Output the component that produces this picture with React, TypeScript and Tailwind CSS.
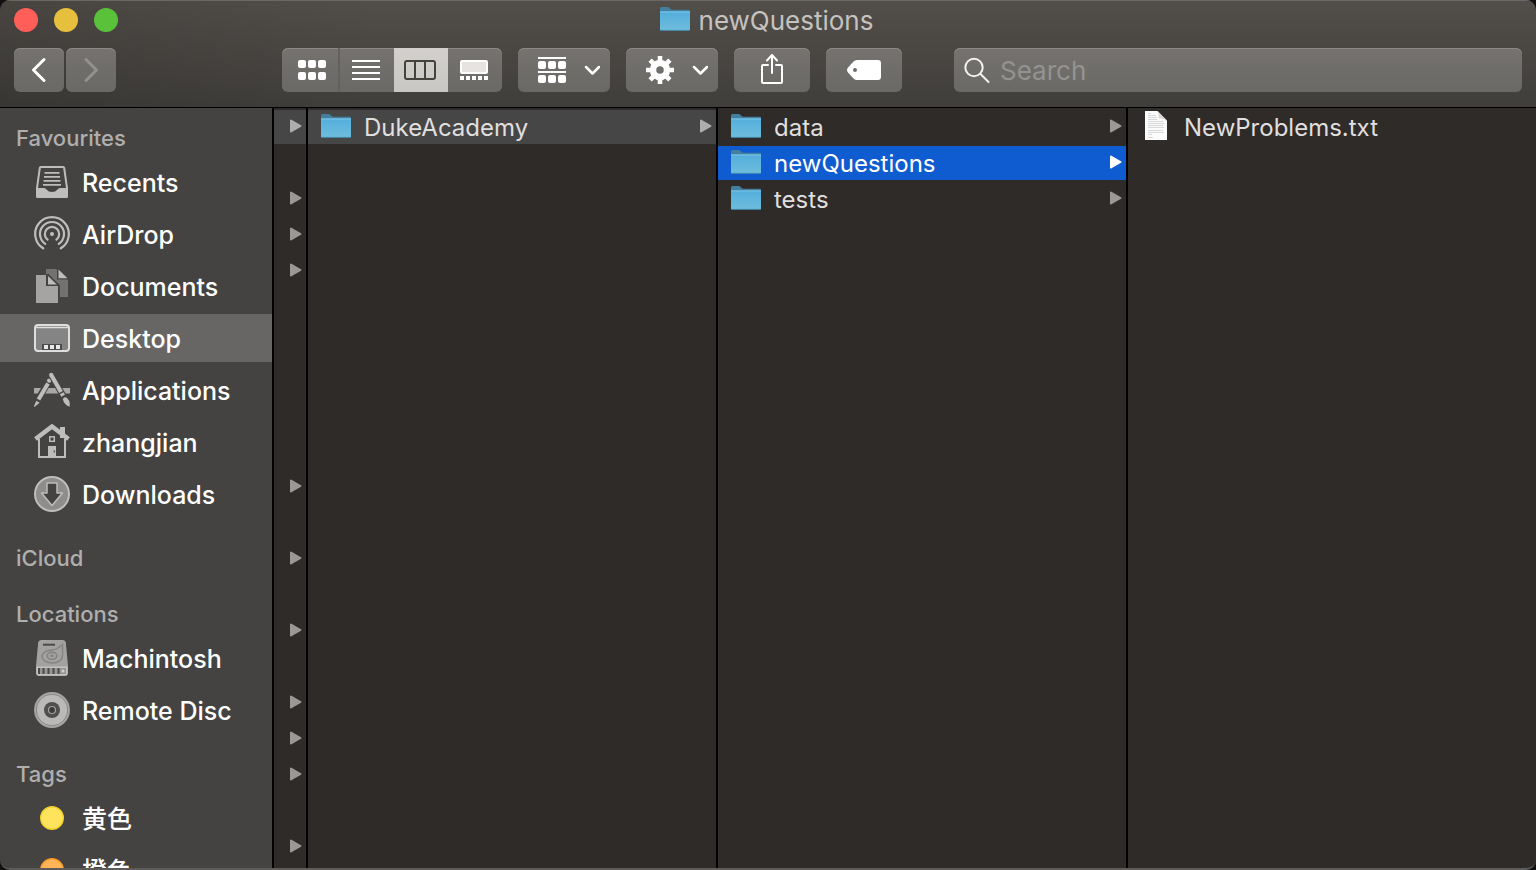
import React from "react";

const svg = "block shrink-0";

function FolderIcon() {
  return (
    <svg className={svg} width="32" height="26" viewBox="0 1 32 26" aria-hidden="true">
      <defs>
        <linearGradient id="folderFace" x1="0" y1="0" x2="0" y2="1">
          <stop offset="0" stopColor="#53aedb" />
          <stop offset="1" stopColor="#6fbddd" />
        </linearGradient>
      </defs>
      <path d="M1 2.500Q1 1 2.500 1H8.500Q9.500 1 10.300 1.800L11.500 3Q12.300 3.800 13.500 3.800H30Q31 3.800 31 5V23H1Z" fill="#447f9f" />
      <path d="M1 5.500H31V23.500Q31 24.600 30 24.600H2Q1 24.600 1 23.500Z" fill="url(#folderFace)" />
      <path d="M1 5.500H31V6.400H1Z" fill="#85cdec" />
      <path d="M1.300 24.400H30.700" stroke="#3e88ab" strokeWidth="0.800" />
    </svg>
  );
}

function FileIcon() {
  return (
    <svg className={svg} width="24" height="34" viewBox="0 0 24 34" aria-hidden="true">
      <path d="M1 1H13.500L23 10.500V30H1Z" fill="#fbfbfb" />
      <path d="M13.500 1Q15.500 5 14.500 8.500Q18.500 7.800 23 11Z" fill="#d6d6d6" />
      <path
        d="M4 3.500H7M4 5.500H12M4 7.500H13M4 9.500H13M4 11.500H19M4 13.500H20M4 15.500H19M4 17.500H20M4 20.500H19M4 22.500H20M4 24.500H8M4 27.500H9"
        stroke="#c9c9c9"
        strokeWidth="0.700"
      />
    </svg>
  );
}

function Arrow() {
  return (
    <svg className={svg} width="12" height="14" viewBox="0 0 12 14" aria-hidden="true">
      <path d="M1 1.500L10.500 7L1 12.500Z" fill="currentColor" stroke="currentColor" strokeWidth="2" strokeLinejoin="round" />
    </svg>
  );
}

function Chevron() {
  return (
    <svg className={svg} width="16" height="10" viewBox="0 0 16 10" fill="none" aria-hidden="true">
      <path d="M2 2L8.500 8.500L15 2" stroke="#fff" strokeWidth="2.500" strokeLinecap="round" strokeLinejoin="round" />
    </svg>
  );
}

function RecentsIcon() {
  return (
    <svg className={svg} width="36" height="36" viewBox="0 0 36 36" fill="none" aria-hidden="true">
      <path d="M7 3H29Q30 3 30.200 4L33 24V32.500Q33 33 32.500 33H3.500Q3 33 3 32.500V24L5.800 4Q6 3 7 3Z" stroke="#bdbdbc" strokeWidth="2" />
      <path d="M3 24H10Q11.500 24 12.500 25.500Q14.500 28 18 28T23.500 25.500Q24.500 24 26 24H33V33H3Z" fill="#bdbdbc" />
      <path d="M10.500 8.800H25.500M10 12.800H26M9.500 16.800H26.500M9 20.800H27" stroke="#bdbdbc" strokeWidth="1.800" />
    </svg>
  );
}

function AirDropIcon() {
  return (
    <svg className={svg} width="36" height="36" viewBox="0 0 36 36" fill="none" stroke="#bdbdbc" strokeWidth="2.200" strokeLinecap="round" aria-hidden="true">
      <circle cx="18" cy="18" r="2.100" fill="#bdbdbc" stroke="none" />
      <path d="M13.600 23.700A7.200 7.200 0 1 1 22.400 23.700" />
      <path d="M11.200 27.900A12 12 0 1 1 24.800 27.900" />
      <path d="M9.200 32.300A16.800 16.800 0 1 1 26.800 32.300" />
    </svg>
  );
}

function DocumentsIcon() {
  return (
    <svg className={svg} width="36" height="36" viewBox="0 0 36 36" aria-hidden="true">
      <path d="M12 1H22L34 12V29H12Z" fill="#737271" />
      <path d="M23 0V11.500H35V9.500L25 0Z" fill="#444342" />
      <path d="M24.500 1.500L33.500 10.300H24.500Z" fill="#bdbdbc" />
      <path d="M1 6H12.500L25.500 17V36H1Z" fill="#444342" />
      <path d="M2 7H12V18H24V35H2Z" fill="#a5a4a3" />
      <path d="M14 8L23 16.500H14Z" fill="#bdbdbc" />
      <path d="M13.500 6L25 17.500V30" fill="none" stroke="#444342" strokeWidth="1.500" />
    </svg>
  );
}

function DesktopIcon() {
  return (
    <svg className={svg} width="36" height="36" viewBox="0 0 36 36" fill="none" aria-hidden="true">
      <rect x="1" y="5" width="34" height="26" rx="3" fill="#858484" stroke="#dedede" strokeWidth="2" />
      <path d="M2 7.500H34" stroke="#dedede" strokeWidth="1.500" />
      <path d="M8 24H28V30H8Z" fill="#4b4b4a" />
      <path d="M10 25h4v4h-4zM16 25h4v4h-4zM22 25h4v4h-4z" fill="#e8e8e8" />
    </svg>
  );
}

function ApplicationsIcon() {
  return (
    <svg className={svg} width="36" height="36" viewBox="0 0 36 36" fill="none" aria-hidden="true">
      <path d="M0 16H36V21.500H0Z" fill="#a9a8a7" />
      <path d="M16 7L2 31" stroke="#444342" strokeWidth="6.500" />
      <path d="M14 11.500L4.500 27.500" stroke="#bdbdbc" strokeWidth="4" />
      <circle cx="15.200" cy="8.600" r="2.200" fill="#bdbdbc" />
      <path d="M2.300 28.800L5.600 30.800L0.500 35L0 34.200Z" fill="#bdbdbc" />
      <path d="M17 2.500L31 27" stroke="#444342" strokeWidth="6.500" />
      <path d="M17.200 3L27 20" stroke="#bdbdbc" strokeWidth="4.200" />
      <circle cx="17.200" cy="2.900" r="2.100" fill="#bdbdbc" />
      <path d="M27.700 21.200L29.200 23.800" stroke="#bdbdbc" strokeWidth="4.200" />
      <path d="M28.800 27Q30.500 24 33.500 26.500Q36.500 29 35.500 34.800Q30 32.500 28.800 27Z" fill="#bdbdbc" />
    </svg>
  );
}

function HomeIcon() {
  return (
    <svg className={svg} width="36" height="36" viewBox="0 0 36 36" fill="none" aria-hidden="true">
      <path d="M26 3H31V14H26Z" fill="#bdbdbc" />
      <path d="M5 15V33H31V15" stroke="#bdbdbc" strokeWidth="2" />
      <path d="M1.500 15L18 2.500L34.500 15" stroke="#bdbdbc" strokeWidth="4.500" />
      <rect x="15.800" y="12.800" width="4.500" height="4.500" stroke="#bdbdbc" strokeWidth="1.500" />
      <path d="M14 22H22V33H14Z" fill="#bdbdbc" />
      <path d="M20.300 26.500V28.500" stroke="#444342" strokeWidth="1.200" />
    </svg>
  );
}

function DownloadsIcon() {
  return (
    <svg className={svg} width="36" height="36" viewBox="0 0 36 36" fill="none" aria-hidden="true">
      <circle cx="18" cy="18" r="17" fill="#8e8d8c" stroke="#bdbdbc" strokeWidth="2" />
      <path d="M13 7H23V17H28.500L18 29.500L7.500 17H13Z" fill="#444342" stroke="#bdbdbc" strokeWidth="1.500" strokeLinejoin="round" />
    </svg>
  );
}

function DriveIcon() {
  return (
    <svg className={svg} width="36" height="36" viewBox="0 0 36 36" fill="none" aria-hidden="true">
      <path d="M7 0H29Q31.500 0 31.800 2.500L34 26V33Q34 36 31 36H5Q2 36 2 33V26L4.200 2.500Q4.500 0 7 0Z" fill="#a3a2a1" />
      <path d="M2.500 26.500H33.500V33Q33.500 35.500 31 35.500H5Q2.500 35.500 2.500 33Z" fill="#c2c2c1" />
      <path d="M4 28H32V34H4Z" fill="#979695" />
      <path d="M9 4.700H21" stroke="#4b4a49" strokeWidth="2" />
      <path d="M28.500 4.500V15.500C28.500 20 24 23 18.500 23S8 20 8 16.500S13 10 17.500 10C22.500 10 25 8 28.500 4.500Z" stroke="#858483" strokeWidth="1.400" />
      <ellipse cx="18" cy="15.700" rx="4.800" ry="3.600" stroke="#858483" strokeWidth="1.600" />
      <ellipse cx="18" cy="15.700" rx="2" ry="1.200" fill="#858483" />
      <path d="M5 28V34M9.500 28V34M14.500 28V34M19.500 28V34M24.500 28V34" stroke="#4b4a49" strokeWidth="2" />
      <circle cx="29" cy="31" r="1.500" fill="#d0d0d0" />
    </svg>
  );
}

function DiscIcon() {
  return (
    <svg className={svg} width="36" height="36" viewBox="0 0 36 36" fill="none" aria-hidden="true">
      <circle cx="18" cy="18" r="17.200" fill="#bab9b8" stroke="#a3a2a1" strokeWidth="1.500" />
      <circle cx="18" cy="18" r="15.800" stroke="#858483" strokeWidth="1" />
      <circle cx="18" cy="18" r="8" fill="#504f4e" />
      <circle cx="18" cy="18" r="3.500" fill="#3c3b3a" stroke="#a3a2a1" strokeWidth="1.200" />
    </svg>
  );
}

function Dot({ fill, rim }: { fill: string; rim: string }) {
  return (
    <svg className={svg} width="36" height="36" viewBox="0 0 36 36" aria-hidden="true">
      <circle cx="18" cy="18" r="11.300" fill={fill} stroke={rim} strokeWidth="1.400" />
    </svg>
  );
}

const sections = [
  {
    title: "Favourites",
    items: [
      { name: "Recents", icon: <RecentsIcon /> },
      { name: "AirDrop", icon: <AirDropIcon /> },
      { name: "Documents", icon: <DocumentsIcon /> },
      { name: "Desktop", icon: <DesktopIcon />, active: true },
      { name: "Applications", icon: <ApplicationsIcon /> },
      { name: "zhangjian", icon: <HomeIcon /> },
      { name: "Downloads", icon: <DownloadsIcon /> },
    ],
  },
  { title: "iCloud", items: [] },
  {
    title: "Locations",
    items: [
      { name: "Machintosh", icon: <DriveIcon /> },
      { name: "Remote Disc", icon: <DiscIcon /> },
    ],
  },
  {
    title: "Tags",
    items: [
      { name: "黄色", icon: <Dot fill="#ffe35c" rim="#f2cf2a" /> },
      { name: "橙色", icon: <Dot fill="#ffb458" rim="#f79a24" /> },
    ],
  },
] as { title: string; items: { name: string; icon: React.ReactNode; active?: boolean }[] }[];

const parentRows = [1, 0, 1, 1, 1, 0, 0, 0, 0, 0, 1, 0, 1, 0, 1, 0, 1, 1, 1, 0, 1];

const button =
  "flex h-11 shrink-0 items-center rounded-md bg-linear-to-b from-[#75726f] to-[#6a6966] shadow-[inset_0_1px_0_#8b8885]";

function Row({ name, state, file }: { name: string; state?: "path" | "selected"; file?: boolean }) {
  const tone =
    state === "selected" ? "bg-[#0f5bd0] text-white" : state === "path" ? "bg-[#464646] text-[#e0dfdf]" : "text-[#e0dfdf]";
  const arrow = state === "selected" ? "text-white" : state === "path" ? "text-[#adadad]" : "text-[#9a9998]";
  return (
    <li>
      <button type="button" className={`flex h-[34px] w-full items-center pr-1 text-left ${tone} ${file ? "pl-4" : "pl-3"}`}>
        {file ? <FileIcon /> : <FolderIcon />}
        <span className={`flex-1 pt-[2px] text-[24px] leading-8 whitespace-nowrap ${file ? "pl-4" : "pl-3"}`}>{name}</span>
        {!file && (
          <span className={`pb-[2px] ${arrow}`}>
            <Arrow />
          </span>
        )}
      </button>
    </li>
  );
}

export default function App() {
  return (
    <div className="h-screen bg-[#111] font-['Inter','Noto_Sans_CJK_SC',sans-serif]">
      <div className="flex h-full flex-col overflow-hidden rounded-[10px] border-b-2 border-[#5e5c5a] bg-[#2f2b29]">
        <header className="shrink-0 border-b border-black bg-[linear-gradient(to_right,rgb(0_0_0/0.12),transparent_25%),linear-gradient(to_bottom,#524e4a,#403e3b)] shadow-[inset_0_1px_0_#6a6765]">
          <div className="grid h-10 grid-cols-[1fr_auto_1fr] items-center px-[14px]">
            <div className="flex gap-4">
              <button type="button" aria-label="Close" className="size-6 rounded-full bg-[#ff5f58]" />
              <button type="button" aria-label="Minimise" className="size-6 rounded-full bg-[#e6c03c]" />
              <button type="button" aria-label="Zoom" className="size-6 rounded-full bg-[#5ac13a]" />
            </div>
            <h1 className="flex items-center gap-2 pr-1 text-[26px] leading-8 text-[#c5c2bf]">
              <FolderIcon />
              <span className="pt-[2px]">newQuestions</span>
            </h1>
          </div>
          <div className="flex gap-4 px-[14px] pt-2 pb-[15px]">
            <div className="mr-[150px] flex gap-[2px]">
              <button type="button" aria-label="Back" className={`${button} w-[50px] justify-center`}>
                <svg className={svg} width="16" height="26" viewBox="0 0 16 26" fill="none">
                  <path d="M13 2.500L2.500 13L13 23.500" stroke="#fff" strokeWidth="3" strokeLinecap="round" strokeLinejoin="round" />
                </svg>
              </button>
              <button type="button" aria-label="Forward" className={`${button} w-[50px] justify-center`}>
                <svg className={svg} width="16" height="26" viewBox="0 0 16 26" fill="none">
                  <path d="M3 2.500L13.500 13L3 23.500" stroke="#939291" strokeWidth="3" strokeLinecap="round" strokeLinejoin="round" />
                </svg>
              </button>
            </div>
            <div className={`${button} overflow-hidden`}>
              <button type="button" aria-label="Icon view" className="flex h-11 w-[58px] items-center justify-center border-r-2 border-[#63605d] pl-1">
                <svg className={svg} width="28" height="20" viewBox="0 0 28 20" fill="#fff">
                  <rect width="8" height="8" rx="2" />
                  <rect x="10" width="8" height="8" rx="2" />
                  <rect x="20" width="8" height="8" rx="2" />
                  <rect y="12" width="8" height="8" rx="2" />
                  <rect x="10" y="12" width="8" height="8" rx="2" />
                  <rect x="20" y="12" width="8" height="8" rx="2" />
                </svg>
              </button>
              <button type="button" aria-label="List view" className="flex h-11 w-[54px] items-center justify-center pr-[2px]">
                <svg className={svg} width="28" height="20" viewBox="0 0 28 20" stroke="#fff" strokeWidth="2">
                  <path d="M0 1H28M0 7H28M0 13H28M0 19H28" />
                </svg>
              </button>
              <button type="button" aria-label="Column view" className="flex h-11 w-[54px] items-center justify-center bg-linear-to-b from-[#d3d0cd] to-[#c8c7c4] pr-[2px]">
                <svg className={svg} width="32" height="20" viewBox="0 0 32 20" fill="none" stroke="#43433c" strokeWidth="2">
                  <rect x="1" y="1" width="30" height="18" rx="2" />
                  <path d="M11 1V19M21 1V19" />
                </svg>
              </button>
              <button type="button" aria-label="Gallery view" className="flex h-11 w-[54px] items-center justify-center pr-[2px]">
                <svg className={svg} width="28" height="20" viewBox="0 0 28 20" fill="#fff">
                  <rect x="1" y="1" width="26" height="12" rx="1" fill="#e6e3e1" stroke="#fff" strokeWidth="2" />
                  <path d="M0 16h4v4H0zM6 16h4v4H6zM12 16h4v4h-4zM18 16h4v4h-4zM24 16h4v4h-4z" />
                </svg>
              </button>
            </div>
            <button type="button" aria-label="Group items" className={`${button} w-[92px] justify-between pr-[10px] pl-5`}>
              <svg className={svg} width="28" height="26" viewBox="0 0 28 26" fill="#fff">
                <path d="M0 0H28V2H0ZM0 14H28V16H0Z" />
                <rect y="4" width="8" height="8" rx="2" />
                <rect x="10" y="4" width="8" height="8" rx="2" />
                <rect x="20" y="4" width="8" height="8" rx="2" />
                <rect y="18" width="8" height="8" rx="2" />
                <rect x="10" y="18" width="8" height="8" rx="2" />
                <rect x="20" y="18" width="8" height="8" rx="2" />
              </svg>
              <Chevron />
            </button>
            <button type="button" aria-label="Actions" className={`${button} w-[92px] justify-between pr-[10px] pl-5`}>
              <svg className={svg} width="28" height="28" viewBox="-14 -14 28 28" fill="none">
                <circle r="7" stroke="#fff" strokeWidth="6.500" />
                <path
                  d="M0 -14V-9M0 9V14M-14 0H-9M9 0H14M-9.900 -9.900L-6.500 -6.500M6.500 6.500L9.900 9.900M9.900 -9.900L6.500 -6.500M-6.500 6.500L-9.900 9.900"
                  stroke="#fff"
                  strokeWidth="4.600"
                />
              </svg>
              <Chevron />
            </button>
            <button type="button" aria-label="Share" className={`${button} w-[76px] justify-center`}>
              <svg className={svg} width="24" height="32" viewBox="0 1 24 32" fill="none" stroke="#fff" strokeWidth="2" strokeLinecap="round" strokeLinejoin="round">
                <path d="M8 12H3Q2 12 2 13V29Q2 30 3 30H21Q22 30 22 29V13Q22 12 21 12H16" />
                <path d="M12 20V2M7 7.500L12 2L17 7.500" />
              </svg>
            </button>
            <button type="button" aria-label="Edit tags" className={`${button} w-[76px] justify-center`}>
              <svg className={svg} width="34" height="20" viewBox="0 0 34 20">
                <path fillRule="evenodd" d="M10 0H31Q34 0 34 3V17Q34 20 31 20H10Q8 20 6.500 18.500L1 12.500Q-1 10 1 7.500L6.500 1.500Q8 0 10 0ZM8 8A2 2 0 1 0 8 12A2 2 0 1 0 8 8Z" fill="#fff" />
              </svg>
            </button>
            <label className={`${button} ml-9 min-w-0 flex-1 gap-2 px-[10px]`}>
              <svg className={svg} width="28" height="28" viewBox="0 -1 28 28" fill="none" stroke="#f3f2f1" strokeWidth="2">
                <circle cx="10" cy="10.500" r="8.700" />
                <path d="M16.500 17L24.500 25" strokeLinecap="round" />
              </svg>
              <input
                type="search"
                aria-label="Search"
                placeholder="Search"
                className="min-w-0 flex-1 bg-transparent pt-[2px] text-[26px] leading-8 text-white outline-none placeholder:text-[#959391]"
              />
            </label>
          </div>
        </header>

        <main className="flex min-h-0 flex-1">
          <nav aria-label="Sidebar" className="flex w-[274px] shrink-0 flex-col gap-4 overflow-hidden border-r-2 border-black bg-[#444342] pt-[10px]">
            {sections.map((section) => (
              <section key={section.title} className="shrink-0">
                <h2 className="h-10 pl-4 text-[22px] leading-10 font-medium text-[#b0afae]">{section.title}</h2>
                <ul>
                  {section.items.map((item) => (
                    <li key={item.name} className="pb-1">
                      <a
                        href="#"
                        aria-current={item.active ? "page" : undefined}
                        className={`flex h-12 items-center gap-3 pl-[34px] text-[25px] leading-8 font-medium whitespace-nowrap text-white ${item.active ? "bg-[#676665]" : ""}`}
                      >
                        {item.icon}
                        <span className="pt-[2px]">{item.name}</span>
                      </a>
                    </li>
                  ))}
                </ul>
              </section>
            ))}
          </nav>

          <ul aria-label="Desktop" className="flex w-[34px] shrink-0 flex-col gap-[2px] overflow-hidden border-r-2 border-black pt-[2px]">
            {parentRows.map((hasArrow, i) => (
              <li
                key={i}
                className={`flex h-[34px] shrink-0 items-center justify-end pr-1 pb-[2px] ${i === 0 ? "bg-[#464646] text-[#adadad]" : "text-[#9a9998]"}`}
              >
                {hasArrow ? <Arrow /> : null}
              </li>
            ))}
          </ul>

          <ul aria-label="Parent folder" className="flex min-w-0 flex-1 flex-col gap-[2px] border-r-2 border-black pt-[2px]">
            <Row name="DukeAcademy" state="path" />
          </ul>
          <ul aria-label="DukeAcademy" className="flex min-w-0 flex-1 flex-col gap-[2px] border-r-2 border-black pt-[2px]">
            <Row name="data" />
            <Row name="newQuestions" state="selected" />
            <Row name="tests" />
          </ul>
          <ul aria-label="newQuestions" className="flex min-w-0 flex-1 flex-col gap-[2px] pt-[2px]">
            <Row name="NewProblems.txt" file />
          </ul>
        </main>
      </div>
    </div>
  );
}
